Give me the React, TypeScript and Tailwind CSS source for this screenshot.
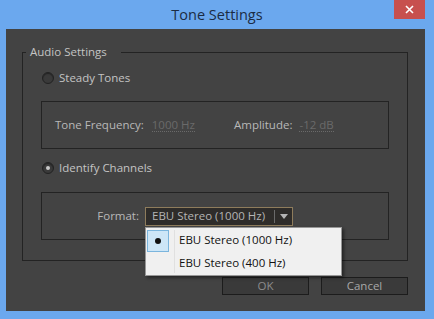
import React from "react";

function Radio({ checked }: { checked?: boolean }) {
  return (
    <div className="w-[12px] h-[12px] rounded-full border border-[#222] bg-[#3a3a3a] flex items-center justify-center shadow-[inset_0_1px_1px_rgba(0,0,0,0.4)]">
      {checked && <div className="w-[4px] h-[4px] rounded-full bg-[#c8c8c8]" />}
    </div>
  );
}

export default function App() {
  return (
    <div
      className="w-[434px] h-[319px] bg-[#6ba8ee] relative overflow-hidden text-[11.5px]"
      style={{ fontFamily: '"Open Sans", "Noto Sans", sans-serif' }}
    >
      {/* title bar */}
      <div className="h-[29px] flex items-center justify-center">
        <span className="text-[14.5px] text-[#1b2c44] mt-[1px]">Tone Settings</span>
      </div>
      <div className="absolute left-[394px] top-0 w-[31px] h-[19px] bg-[#c7504e] flex items-center justify-center">
        <svg width="9" height="9" viewBox="0 0 9 9">
          <path d="M1 1 L8 8 M8 1 L1 8" stroke="white" strokeWidth="1.6" />
        </svg>
      </div>

      {/* panel */}
      <div className="ml-[6px] w-[419px] h-[282px] bg-[#434343] pt-[23px] pl-[16px] flex flex-col">
        {/* group box */}
        <div className="relative w-[386px] h-[209px] border border-[#232323] pt-[17px] px-[18px]">
          <span className="absolute left-[3px] top-[-10px] bg-[#434343] pl-[4px] pr-[14px] text-[#c4c4c4] leading-[18px]">
            Audio Settings
          </span>
          <div className="flex items-center gap-[5px] h-[16px] ml-[1px] text-[#c4c4c4]">
            <Radio />
            <span>Steady Tones</span>
          </div>
          <div className="mt-[15px] h-[48px] border border-[#232323] flex items-center pl-[13px]">
            <div className="w-[179px] flex items-center">
              <span className="text-[#b8b8b8]">Tone Frequency:</span>
              <span className="ml-[8px] text-[#6a6a6a] border-b border-dotted border-[#6a6a6a] leading-[13px]">1000 Hz</span>
            </div>
            <span className="text-[#b8b8b8]">Amplitude:</span>
            <span className="ml-[7px] text-[#6a6a6a] border-b border-dotted border-[#6a6a6a] leading-[13px]">-12 dB</span>
          </div>
          <div className="mt-[11px] flex items-center gap-[5px] h-[16px] ml-[1px] text-[#c4c4c4]">
            <Radio checked />
            <span>Identify Channels</span>
          </div>
          <div className="mt-[16px] h-[48px] border border-[#232323] flex items-center">
            <div className="w-[103px] flex justify-end pr-[6px]">
              <span className="text-[#b8b8b8]">Format:</span>
            </div>
            <div className="w-[148px] h-[19px] bg-[#2e2c2a] border border-[#8e7c5c] flex items-center">
              <span className="pl-[6px] text-[#b4b4b4] flex-1">EBU Stereo (1000 Hz)</span>
              <div className="w-px h-[13px] bg-[#6a6a6a]" />
              <div className="w-[17px] flex items-center justify-center">
                <svg width="8" height="5" viewBox="0 0 8 5">
                  <path d="M0 0 H8 L4 5 Z" fill="#b4b4b4" />
                </svg>
              </div>
            </div>
          </div>
        </div>

        {/* buttons */}
        <div className="mt-[16px] flex justify-end gap-[12px] w-[386px]">
          <div className="w-[87px] h-[18px] bg-[#3a3a3a] border border-[#1c1c1c] flex items-center justify-center text-[#8c8c8c] leading-none">
            OK
          </div>
          <div className="w-[87px] h-[18px] bg-[#3a3a3a] border border-[#1c1c1c] flex items-center justify-center text-[#a8a8a8] leading-none">
            Cancel
          </div>
        </div>
      </div>

      {/* dropdown menu */}
      <div className="absolute left-[145px] top-[227px] w-[197px] h-[49px] bg-[#f0f0f0] border border-[#979797] shadow-[2px_2px_3px_rgba(0,0,0,0.45)] flex flex-col text-[#111]">
        <div className="absolute left-[28px] top-[2px] bottom-[2px] w-px bg-[#e0e0e0]" />
        <div className="h-[24px] flex items-center relative">
          <div className="ml-[1px] mt-[1px] w-[22px] h-[22px] bg-[#cde6f7] border border-[#7bb5dd] flex items-center justify-center">
            <div className="w-[6px] h-[6px] rounded-full bg-[#111]" />
          </div>
          <span className="ml-[10px]">EBU Stereo (1000 Hz)</span>
        </div>
        <div className="h-[22px] flex items-center">
          <span className="ml-[33px]">EBU Stereo (400 Hz)</span>
        </div>
      </div>
    </div>
  );
}
